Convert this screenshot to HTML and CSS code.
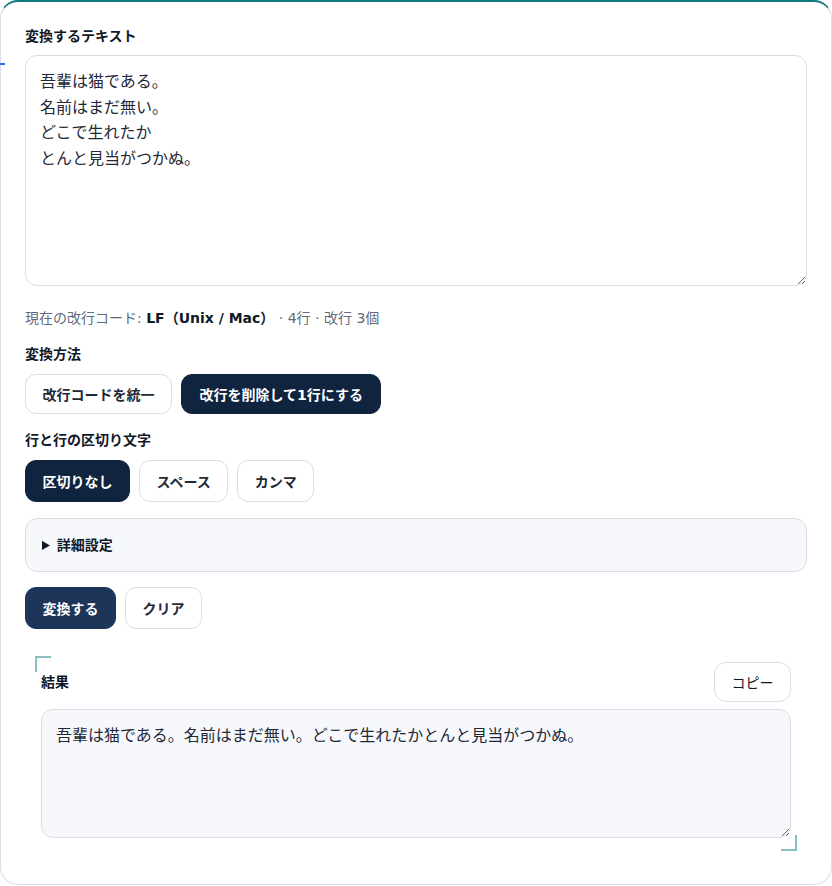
FILE: index.html
```html
<!DOCTYPE html>
<html lang="ja">
<head>
<meta charset="utf-8">
<title>改行コード変換</title>
<link rel="stylesheet" href="styles.css">
</head>
<body>
<div class="mark"></div>
<main class="card">
  <label class="label" for="src">変換するテキスト</label>
  <textarea id="src" class="input">吾輩は猫である。
名前はまだ無い。
どこで生れたか
とんと見当がつかぬ。</textarea>

  <p class="status">現在の改行コード: <strong>LF（Unix / Mac）</strong> · 4行 · 改行 3個</p>

  <div class="label label-gap">変換方法</div>
  <div class="row">
    <button class="btn">改行コードを統一</button>
    <button class="btn btn-dark btn-wide">改行を削除して1行にする</button>
  </div>

  <div class="label label-gap">行と行の区切り文字</div>
  <div class="row row-tall">
    <button class="btn btn-dark">区切りなし</button>
    <button class="btn">スペース</button>
    <button class="btn">カンマ</button>
  </div>

  <details class="advanced">
    <summary>詳細設定</summary>
  </details>

  <div class="row row-tall actions">
    <button class="btn btn-primary">変換する</button>
    <button class="btn">クリア</button>
  </div>

  <section class="result">
    <div class="result-head">
      <span class="label">結果</span>
      <button class="btn btn-copy">コピー</button>
    </div>
    <textarea class="output" readonly>吾輩は猫である。名前はまだ無い。どこで生れたかとんと見当がつかぬ。</textarea>
  </section>
</main>
</body>
</html>
```

FILE: styles.css
```css
html, body {
  margin: 0;
  padding: 0;
  background: #ffffff;
}

body {
  font-family: "DejaVu Sans", "Noto Sans CJK JP", sans-serif;
  color: #111827;
  position: relative;
}

.mark {
  position: absolute;
  left: 0;
  top: 63px;
  width: 5px;
  height: 2px;
  background: #2f6fe4;
  z-index: 2;
}

.card {
  box-sizing: border-box;
  width: 832px;
  display: flex;
  flex-direction: column;
  align-items: flex-start;
  padding: 24px 24px 33px 24px;
  border: 1px solid #d7dee7;
  border-top: 2px solid #137a7f;
  border-radius: 18px;
  background: #ffffff;
}

.label {
  display: block;
  font-size: 14px;
  line-height: 21px;
  font-weight: 700;
  color: #111827;
}

.label-gap {
  margin-top: 15px;
}

.input, .output {
  box-sizing: border-box;
  display: block;
  width: 100%;
  margin: 0;
  font-family: "Noto Sans CJK JP", sans-serif;
  font-size: 16px;
  line-height: 25.6px;
  color: #1f2937;
  border: 1px solid #d7dee7;
  border-radius: 12px;
  padding: 12px 14px;
  resize: vertical;
  outline: none;
}

.input {
  margin-top: 8px;
  height: 231px;
  background: #ffffff;
}

.status {
  margin: 22px 0 0 0;
  font-size: 14px;
  line-height: 21px;
  color: #5f6b7a;
}

.status strong {
  color: #111827;
  font-weight: 700;
}

.row {
  display: flex;
  gap: 9px;
  margin-top: 9px;
}

.row + .label-gap {
  margin-top: 16px;
}

.btn {
  box-sizing: border-box;
  height: 40px;
  padding: 0 16.5px;
  font-family: "DejaVu Sans", "Noto Sans CJK JP", sans-serif;
  font-size: 14px;
  font-weight: 700;
  color: #1f2937;
  background: #ffffff;
  border: 1px solid #d7dee7;
  border-radius: 11px;
  cursor: pointer;
}

.btn-wide {
  padding: 0 17.5px;
}

.row-tall .btn {
  height: 42px;
}

.btn-dark {
  background: #10243f;
  border-color: #10243f;
  color: #ffffff;
}

.btn-primary {
  background: #1c3558;
  border-color: #1c3558;
  color: #ffffff;
}

.advanced {
  box-sizing: border-box;
  width: 100%;
  margin-top: 16px;
  background: #f6f8fb;
  border: 1px solid #d7dee7;
  border-radius: 12px;
}

.advanced summary {
  padding: 16px;
  font-size: 14px;
  line-height: 20px;
  font-weight: 700;
  color: #111827;
  cursor: pointer;
}

.actions {
  margin-top: 15px;
}

.result {
  position: relative;
  box-sizing: border-box;
  width: calc(100% - 20px);
  margin: 27px 0 0 10px;
  padding: 6px 6px 13px 6px;
}

.result::before,
.result::after {
  content: "";
  position: absolute;
  width: 14px;
  height: 14px;
  border-color: #88c0c3;
  border-style: solid;
}

.result::before {
  left: 0;
  top: 0;
  border-width: 2px 0 0 2px;
}

.result::after {
  right: 0;
  bottom: 0;
  border-width: 0 2px 2px 0;
}

.result-head {
  display: flex;
  justify-content: space-between;
  align-items: center;
  height: 40px;
}

.btn-copy {
  height: 40px;
  border-radius: 12px;
  font-weight: 400;
  color: #111827;
}

.output {
  margin-top: 7px;
  height: 129px;
  background: #f6f8fb;
}
```
